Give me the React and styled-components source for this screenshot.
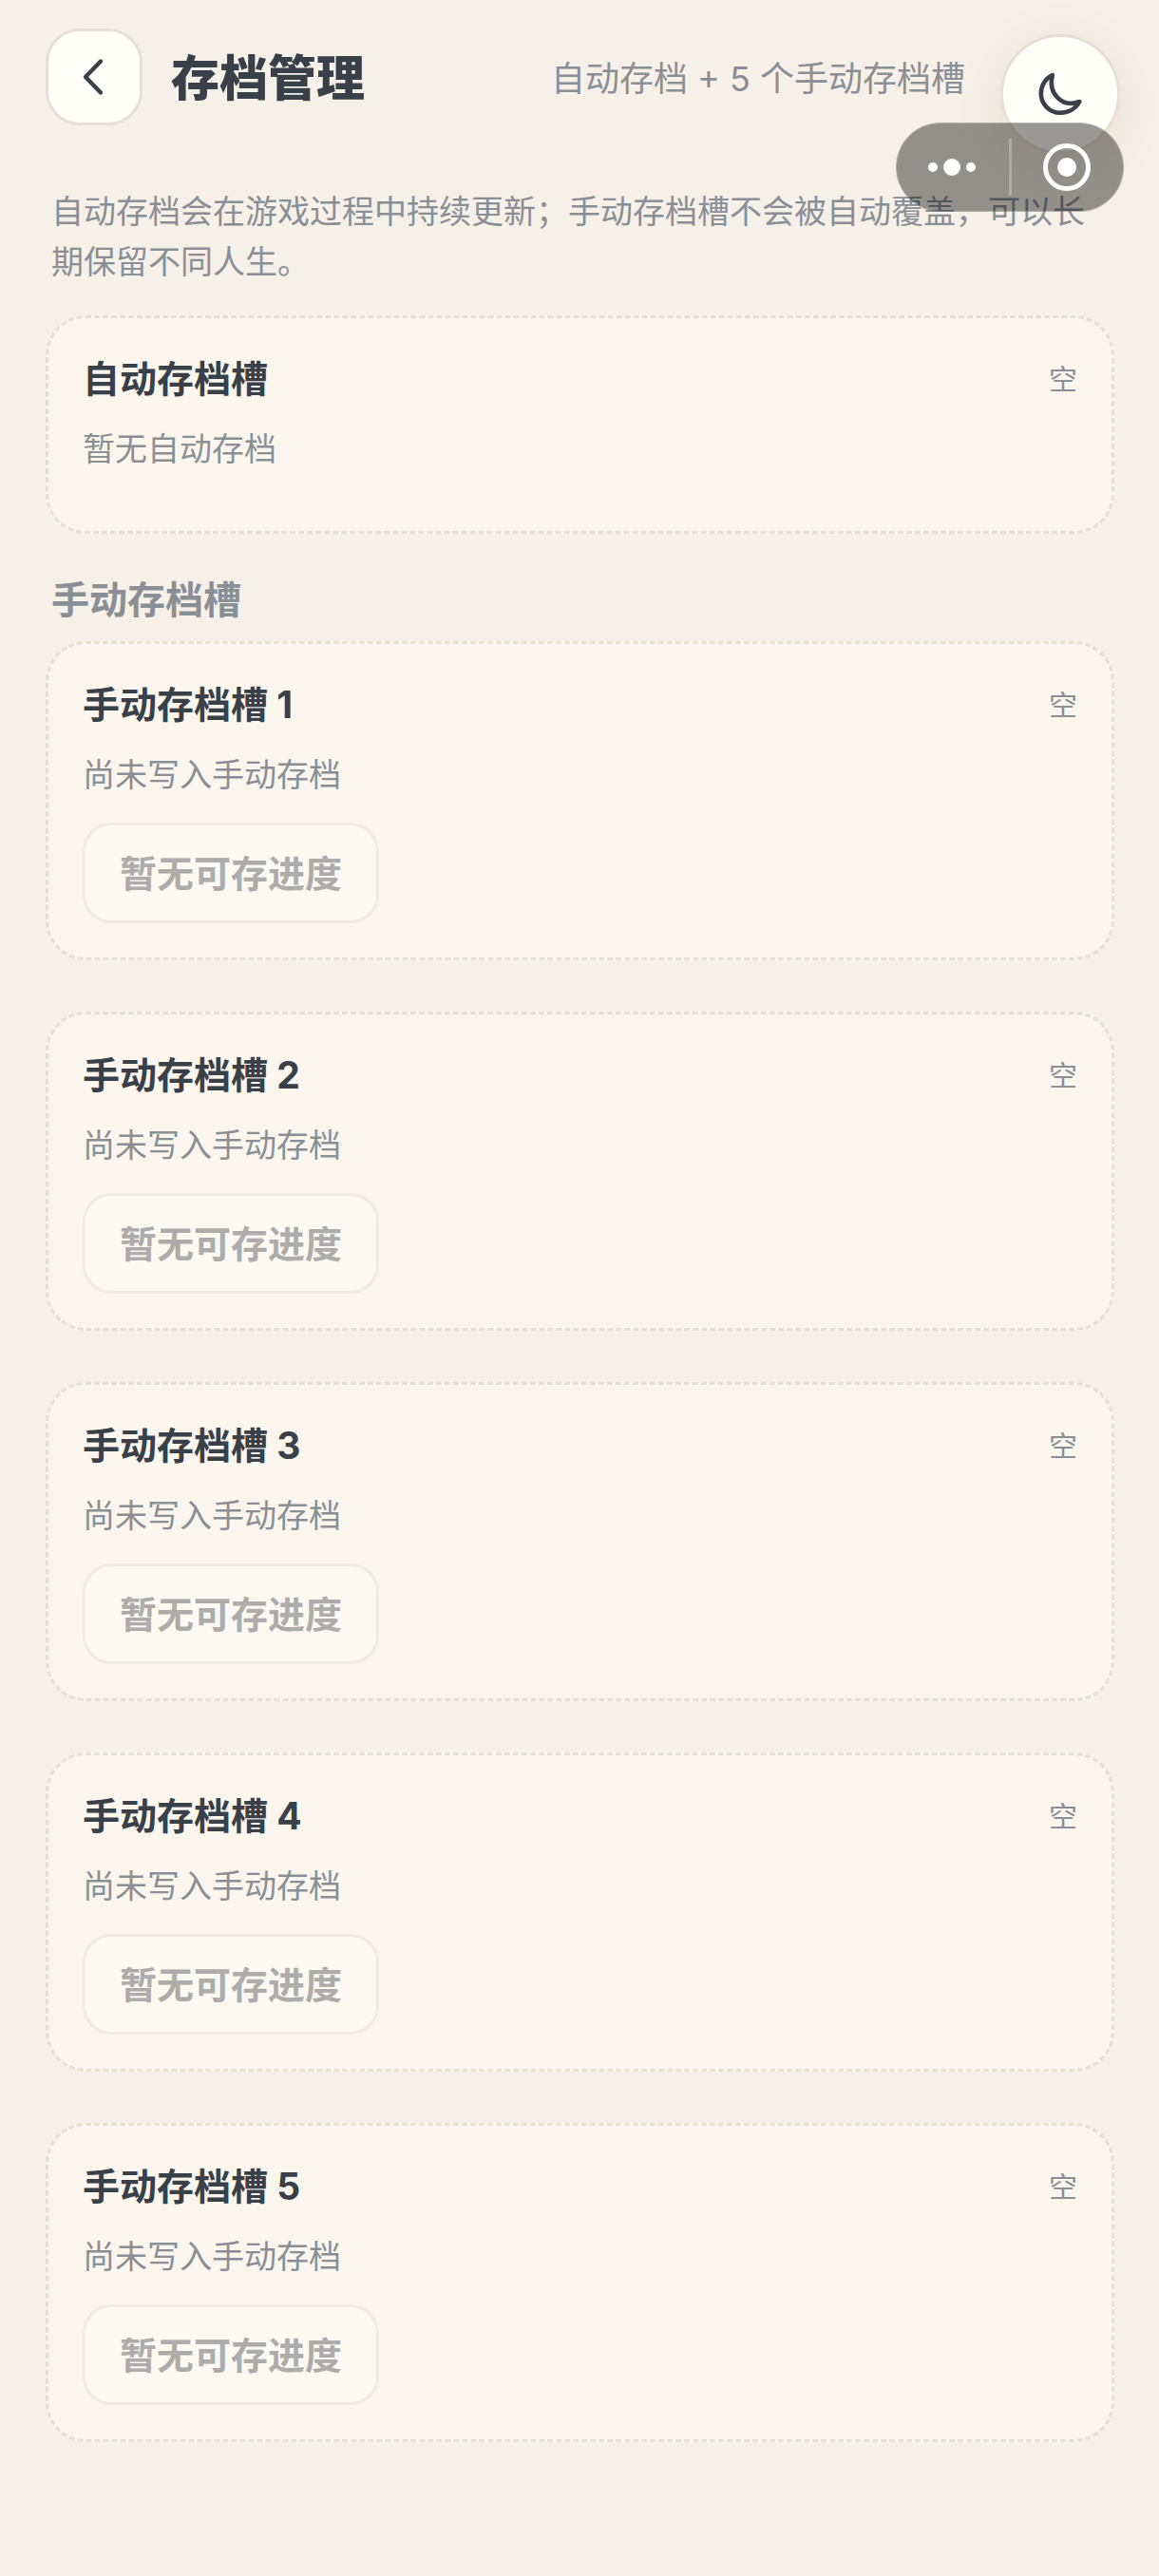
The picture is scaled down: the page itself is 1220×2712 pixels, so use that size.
import styled, { createGlobalStyle } from "styled-components";

const GlobalStyle = createGlobalStyle`
  * {
    box-sizing: border-box;
  }

  body {
    margin: 0;
    background: #f5f0e8;
    color: #3a4047;
    font-family: Inter, "Noto Sans CJK SC", sans-serif;
  }

  button {
    margin: 0;
    font-family: inherit;
  }
`;

const Page = styled.main`
  min-height: 100vh;
  padding: 30px 47px 144px 48px;
`;

const Header = styled.header`
  display: flex;
  align-items: center;
  gap: 30px;
  padding-right: 157px;
`;

const BackButton = styled.button`
  display: flex;
  align-items: center;
  justify-content: center;
  flex: none;
  width: 102px;
  height: 102px;
  padding: 0;
  border: 3px solid #e8e0d4;
  border-radius: 36px;
  background: #fffef9;
  color: #3a4047;
`;

const HeaderText = styled.div`
  display: flex;
  flex: 1;
  align-items: center;
  justify-content: space-between;
  padding-top: 4px;
`;

const Title = styled.h1`
  margin: 0;
  font-size: 51px;
  font-weight: 900;
  line-height: 72px;
`;

const Subtitle = styled.span`
  color: #8a8f96;
  font-size: 36px;
  line-height: 54px;
`;

const Intro = styled.p`
  margin: 64px 0 30px;
  padding: 0 6px;
  color: #8a8f96;
  font-size: 34px;
  line-height: 53px;
`;

const SectionTitle = styled.h2`
  margin: 40px 0 14px;
  padding: 0 6px;
  color: #8a8f96;
  font-size: 40px;
  font-weight: 700;
  line-height: 59px;
`;

const SlotList = styled.div`
  display: flex;
  flex-direction: column;
  gap: 54px;
`;

const SlotCard = styled.section`
  padding: 36px;
  border: 3px dashed #e8e0d2;
  border-radius: 42px;
  background: #faf6ed;
`;

const SlotHead = styled.div`
  display: flex;
  align-items: center;
  justify-content: space-between;
`;

const SlotName = styled.h3`
  margin: 0;
  font-size: 39px;
  font-weight: 700;
  line-height: 55px;
`;

const SlotStatus = styled.span`
  color: #8a8f96;
  font-size: 30px;
  line-height: 48px;
`;

const SlotText = styled.p`
  margin: 20px 0 0;
  color: #8a8f96;
  font-size: 34px;
  line-height: 53px;
`;

const SlotActions = styled.div`
  display: flex;
  padding-top: 24px;
`;

const SaveButton = styled.button`
  padding: 24px 36px 22px;
  border: 3px solid #f1ece1;
  border-radius: 30px;
  background: #fcf9f2;
  color: #adacaa;
  font-size: 39px;
  font-weight: 700;
  line-height: 54px;
`;

const ThemeButton = styled.button`
  position: fixed;
  top: 36px;
  right: 41px;
  display: flex;
  align-items: center;
  justify-content: center;
  width: 126px;
  height: 126px;
  padding: 0;
  border: 3px solid #e8e0d4;
  border-radius: 50%;
  background: #fffef9;
  color: #3a4047;
  box-shadow: 0 12px 48px rgba(180, 165, 110, 0.2);
`;

const Capsule = styled.div`
  position: fixed;
  top: 129px;
  right: 37px;
  display: flex;
  align-items: center;
  width: 240px;
  height: 94px;
  border: 1px solid rgba(255, 255, 255, 0.25);
  border-radius: 47px;
  background: rgba(0, 0, 0, 0.4);
`;

const CapsuleButton = styled.button`
  display: flex;
  align-items: center;
  justify-content: center;
  flex: 1;
  height: 100%;
  padding: 0;
  border: 0;
  background: none;
  color: #fff;
`;

const CapsuleDivider = styled.span`
  width: 3px;
  height: 60px;
  background: rgba(255, 255, 255, 0.25);
`;

const BackIcon = () => (
  <svg width="60" height="60" viewBox="0 0 60 60" fill="none" stroke="currentColor" strokeWidth="4.4" strokeLinecap="round" strokeLinejoin="round">
    <path d="M37 13.5 21 30 37 46.5" />
  </svg>
);

const MoonIcon = () => (
  <svg width="60" height="60" viewBox="0 0 60 60" fill="none" stroke="currentColor" strokeWidth="4.6" strokeLinecap="round" strokeLinejoin="round">
    <path d="M21.8 10C14.5 13.5 9.8 21 9.8 29.5A20.2 20.2 0 0 0 30 49.7C39 49.7 46.5 45 50.3 38C41 41.5 33 39.5 27.3 33.8C21.5 28 19.3 20 21.8 10Z" />
  </svg>
);

const MoreIcon = () => (
  <svg width="52" height="20" viewBox="0 0 52 20" fill="currentColor">
    <circle cx="5" cy="10" r="5" />
    <circle cx="25" cy="10" r="9" />
    <circle cx="45" cy="10" r="5" />
  </svg>
);

const CloseIcon = () => (
  <svg width="52" height="52" viewBox="0 0 52 52">
    <circle cx="26" cy="26" r="22.5" fill="none" stroke="currentColor" strokeWidth="5" />
    <circle cx="26" cy="26" r="10" fill="currentColor" />
  </svg>
);

const manualSlots = [1, 2, 3, 4, 5];

const Slot = ({ name, text, children }) => (
  <SlotCard>
    <SlotHead>
      <SlotName>{name}</SlotName>
      <SlotStatus>空</SlotStatus>
    </SlotHead>
    <SlotText>{text}</SlotText>
    <SlotActions>{children}</SlotActions>
  </SlotCard>
);

export default () => {
  return (
    <>
      <GlobalStyle />
      <Page lang="zh-CN">
        <Header>
          <BackButton type="button" aria-label="返回">
            <BackIcon />
          </BackButton>
          <HeaderText>
            <Title>存档管理</Title>
            <Subtitle>自动存档 + 5 个手动存档槽</Subtitle>
          </HeaderText>
        </Header>
        <Intro>
          自动存档会在游戏过程中持续更新；手动存档槽不会被自动覆盖，可以长期保留不同人生。
        </Intro>
        <Slot name="自动存档槽" text="暂无自动存档" />
        <SectionTitle>手动存档槽</SectionTitle>
        <SlotList>
          {manualSlots.map((n) => (
            <Slot key={n} name={`手动存档槽 ${n}`} text="尚未写入手动存档">
              <SaveButton type="button" disabled>暂无可存进度</SaveButton>
            </Slot>
          ))}
        </SlotList>
      </Page>
      <ThemeButton type="button" aria-label="切换深色模式">
        <MoonIcon />
      </ThemeButton>
      <Capsule>
        <CapsuleButton type="button" aria-label="更多">
          <MoreIcon />
        </CapsuleButton>
        <CapsuleDivider />
        <CapsuleButton type="button" aria-label="关闭">
          <CloseIcon />
        </CapsuleButton>
      </Capsule>
    </>
  );
};
